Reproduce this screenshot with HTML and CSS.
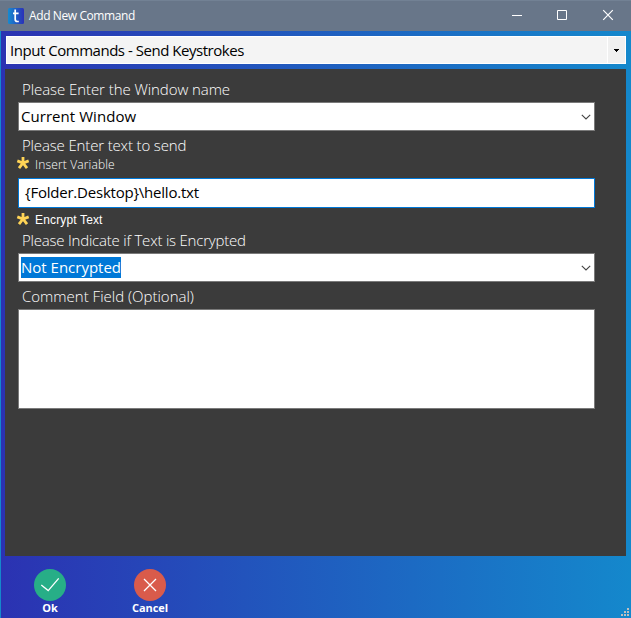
FILE: index.html
```html
<!DOCTYPE html>
<html lang="en">
<head>
<meta charset="utf-8">
<title>Add New Command</title>
<link rel="stylesheet" href="styles.css">
</head>
<body>
<div class="window">
  <header class="titlebar">
    <svg class="app-icon" width="16" height="16" viewBox="0 0 16 16">
      <defs><linearGradient id="brand"><stop offset="0" stop-color="#168bd0"/><stop offset="1" stop-color="#2a30b8"/></linearGradient></defs>
      <rect width="16" height="16" rx="1.5" fill="url(#brand)"/>
      <path d="M7.200 1.500v9.700q0 2.300 2 2.300h1.600M5 5.300h5.600" fill="none" stroke="#fff" stroke-width="1.700"/>
    </svg>
    <span class="title">Add New Command</span>
    <div class="controls">
      <svg width="46" height="31" viewBox="0 0 46 31"><path d="M17 15.500h10" stroke="#fff"/></svg>
      <svg width="46" height="31" viewBox="0 0 46 31"><path d="M17.500 10.500h9v9h-9z" fill="none" stroke="#fff"/></svg>
      <svg width="46" height="31" viewBox="0 0 46 31"><path d="M17.200 10.200l9.600 9.600m0-9.600l-9.600 9.600" stroke="#fff" stroke-width="1.200"/></svg>
    </div>
  </header>
  <main class="body">
    <div class="command-select">
      <span class="value command-value">Input Commands - Send Keystrokes</span>
      <span class="drop"><svg width="5" height="3" viewBox="0 0 5 3" shape-rendering="crispEdges"><path d="M0 0h5v1H4v1H3v1H2V2H1V1H0z"/></svg></span>
    </div>
    <section class="panel">
      <div class="label l-window"><span>Please Enter the Window name</span></div>
      <div class="field combo"><span class="value v-window">Current Window</span><svg class="chevron" width="10" height="6" viewBox="0 0 10 6"><path d="M.8.8L5 5 9.200.8" fill="none" stroke="#444" stroke-width="1.100"/></svg></div>
      <div class="label l-text"><span>Please Enter text to send</span></div>
      <div class="helper"><svg class="star" width="12" height="12" viewBox="0 0 12 12"><path d="M6 0V6M.3 3.900L6 6l5.700-2.100M2 11.200L6 6l4 5.200" fill="none" stroke="#ffd456" stroke-width="2.800"/></svg><span class="h-insert">Insert Variable</span></div>
      <div class="field text"><span class="value v-text">{Folder.Desktop}\hello.txt</span></div>
      <div class="helper encrypt"><svg class="star" width="12" height="12" viewBox="0 0 12 12"><path d="M6 0V6M.3 3.900L6 6l5.700-2.100M2 11.200L6 6l4 5.200" fill="none" stroke="#ffd456" stroke-width="2.800"/></svg><span class="h-encrypt">Encrypt Text</span></div>
      <div class="label l-indicate"><span>Please Indicate if Text is Encrypted</span></div>
      <div class="field combo"><span class="value selected">Not Encrypted</span><svg class="chevron" width="10" height="6" viewBox="0 0 10 6"><path d="M.8.8L5 5 9.200.8" fill="none" stroke="#444" stroke-width="1.100"/></svg></div>
      <div class="label l-comment"><span>Comment Field (Optional)</span></div>
      <div class="field comment"></div>
    </section>
    <footer class="actions">
      <div class="action"><svg width="32" height="32" viewBox="0 0 32 32"><circle cx="16" cy="16" r="16" fill="#27ae87"/><path d="M7.300 16l6.900 5.600L24.700 9.300" fill="none" stroke="#fff" stroke-width="1.300"/></svg><span class="ok">Ok</span></div>
      <div class="action"><svg width="32" height="32" viewBox="0 0 32 32"><circle cx="16" cy="16" r="16" fill="#d95b4b"/><path d="M10 10l12 12m0-12L10 22" stroke="#fff" stroke-width="1.300"/></svg><span class="cancel">Cancel</span></div>
      <svg class="grip" width="8" height="8" viewBox="0 0 8 8" fill="#bfbfbf"><path d="M6 0h2v2H6zM3 3h2v2H3zM6 3h2v2H6zM0 6h2v2H0zM3 6h2v2H3zM6 6h2v2H6z"/></svg>
    </footer>
  </main>
</div>
</body>
</html>
```
FILE: styles.css
```css
* { box-sizing: border-box; }
body { margin: 0; font-family: "Open Sans", "Noto Sans", sans-serif; overflow: hidden; }
.window { width: 631px; height: 618px; display: flex; flex-direction: column; }
.titlebar { height: 31px; background: #687689; border-top: 1px solid #728194; display: flex; align-items: center; padding-left: 8px; color: #fff; }
.app-icon { display: block; margin-right: 5px; }
.title { font-size: 12px; line-height: 16px; letter-spacing: -.4px; white-space: nowrap; }
.controls { display: flex; margin: -1px 0 0 auto; }
.controls svg { display: block; margin-right: -.5px; }
.body { height: 587px; border-left: 1px solid #1488cc; padding: 5px 5px 0 4px; background: linear-gradient(90deg, #2b32b2, #1488cc); }
.command-select { height: 28px; margin: 0 0 5px 1px; border: 1px solid #fff; background: #f4f4f4; display: flex; align-items: center; }
.value { color: #000; font-size: 15px; line-height: 21px; white-space: nowrap; }
.command-value { padding-left: 3px; letter-spacing: -.47px; }
.v-window { letter-spacing: .05px; }
.v-text { letter-spacing: -.22px; margin-top: -2px; }
.drop { width: 18px; height: 26px; margin-left: auto; border-left: 1px solid #fff; background: #f0f0f0; display: flex; align-items: center; justify-content: center; }
.panel { height: 487px; background: #3b3b3b; padding: 9px 0 0 13px; }
.label { height: 22px; margin-top: 3px; padding: 0 0 0 4px; color: #fff; font-size: 15px; font-weight: 300; line-height: 22px; white-space: nowrap; }
.l-window { margin: 0; height: 24px; letter-spacing: -.07px; }
.l-text { height: 24px; letter-spacing: -.15px; }
.l-indicate { margin: 0; height: 24px; letter-spacing: -.21px; }
.l-comment { height: 24px; }
.field { width: 577px; background: #fff; border: 1px solid #7a7a7a; display: flex; align-items: center; padding-left: 2px; }
.combo { height: 29px; }
.chevron { margin: 0 3px 0 auto; }
.text { height: 30px; border-color: #0078d7; padding-left: 6px; }
.comment { height: 100px; }
.helper { height: 20px; margin-left: -1px; display: flex; align-items: flex-start; gap: 6px; color: #fff; font-size: 12px; font-weight: 300; line-height: 16px; }
.star { margin-top: -1px; overflow: visible; }
.h-insert { margin-top: -1px; letter-spacing: .15px; }
.h-encrypt { letter-spacing: .15px; }
.encrypt { height: 21px; padding-top: 4px; font: 12px/16px "Liberation Sans", sans-serif; }
.encrypt .star { margin-top: 1px; }
.selected { color: #fff; background: #0078d7; }
.actions { position: relative; height: 62px; padding: 13px 0 0 28px; display: flex; gap: 66px; }
.action { width: 34px; display: flex; flex-direction: column; align-items: center; }
.action span { color: #fff; font-size: 11px; font-weight: 700; line-height: 14px; white-space: nowrap; }
.action .cancel { letter-spacing: -.1px; }
.grip { position: absolute; right: -3px; bottom: 2px; }
```
